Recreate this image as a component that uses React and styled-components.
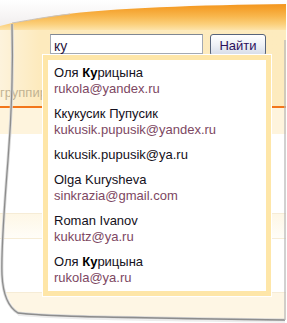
import React from "react";
import styled, { createGlobalStyle } from "styled-components";

const Global = createGlobalStyle`
  html, body { margin: 0; padding: 0; background: #fff; }
  body { font-family: "Liberation Sans", Arial, sans-serif; font-size: 13px; }
`;

const contacts = [
  { name: ["Оля ", "Ку", "рицына"], email: "rukola@yandex.ru" },
  { name: ["Ккукусик Пупусик"], email: "kukusik.pupusik@yandex.ru" },
  { name: ["kukusik.pupusik@ya.ru"] },
  { name: ["Olga Kurysheva"], email: "sinkrazia@gmail.com" },
  { name: ["Roman Ivanov"], email: "kukutz@ya.ru" },
  { name: ["Оля ", "Ку", "рицына"], email: "rukola@ya.ru" },
];

function App() {
  return (
    <>
      <Global />
      <Frame>
        <Page>
          <Header />
          <Panel>
            <SearchRow>
              <Input>ку</Input>
              <Button>Найти</Button>
            </SearchRow>
            <GroupLabel>группир</GroupLabel>
          </Panel>
          <Row tone="cream" h={26} />
          <Row h={79} />
          <Row tone="fade" h={25} line />
          <Row h={27} line />
          <Row h={27} />
          <Footer />

          <Dropdown>
            {contacts.map((c, i) => (
              <Item key={i}>
                <Name>
                  {c.name.map((part, j) =>
                    j === 1 ? <b key={j}>{part}</b> : <span key={j}>{part}</span>
                  )}
                </Name>
                {c.email && <Email>{c.email}</Email>}
              </Item>
            ))}
          </Dropdown>
        </Page>

        <Curl viewBox="0 0 287 323" width="287" height="323">
          <defs>
            <linearGradient id="topShade" x1="0" y1="0" x2="0" y2="1">
              <stop offset="0" stopColor="#ffffff" />
              <stop offset="1" stopColor="#f1eeee" />
            </linearGradient>
          </defs>
          <path d="M0,0 L287,0 L287,4 C200,5 110,8 60,15 C40,18 24,21 12,23 L0,26 Z" fill="url(#topShade)" />
          <path d="M12,23 C30,20 45,17 70,14" fill="none" stroke="#c9c2bc" strokeWidth="1" />
          <path d="M0,250 C1,275 4,298 18,313 L80,317 L285,320 L287,320 L287,323 L0,323 Z" fill="#fff" />
          <rect x="286" y="0" width="1" height="323" fill="#fff" />
          <path d="M12,24 C13,60 12,110 8,160 C4,210 1,250 2,275 C3,295 8,307 18,313 C40,316 80,317 285,320"
            fill="none" stroke="#d8d8d8" strokeWidth="3" />
          <path d="M12,24 C13,60 12,110 8,160 C4,210 1,250 2,275 C3,295 8,307 18,313 C40,316 80,317 285,320"
            fill="none" stroke="#8d8d8d" strokeWidth="1.3" />
          <path d="M285,40 L285,320" fill="none" stroke="#b9b9b9" strokeWidth="1.3" />
          <path d="M18,315 C60,319 120,320 285,322" fill="none" stroke="#ececec" strokeWidth="1.5" />
        </Curl>
      </Frame>
    </>
  );
}

export default App;

const Frame = styled.div`
  position: relative;
  width: 287px;
  height: 323px;
  overflow: hidden;
  background: #fff;
`;

const Page = styled.div`
  position: relative;
  width: 287px;
  display: flex;
  flex-direction: column;
`;

const Header = styled.div`
  height: 30px;
  background: linear-gradient(
    to bottom,
    #f28d12 0px,
    #f59f2a 8px,
    #f8b64c 16px,
    #fbcf7a 24px,
    #fde3a9 30px
  );
`;

const Panel = styled.div`
  height: 78px;
  box-sizing: border-box;
  display: flex;
  flex-direction: column;
  justify-content: space-between;
  padding: 4px 0 6px 0;
  background: linear-gradient(to right, #fdf3dc 0px, #fdeabd 40px, #fdebbe 100%);
  border-bottom: 2px solid #f2761a;
`;

const SearchRow = styled.div`
  display: flex;
  align-items: flex-start;
  gap: 7px;
  padding-left: 50px;
`;

const Input = styled.div`
  width: 153px;
  height: 20px;
  box-sizing: border-box;
  padding: 3px 0 0 3px;
  background: #fff;
  border: 1px solid #a3a9b3;
  border-top-color: #7f8793;
  color: #2a1540;
  font-size: 14px;
  line-height: 16px;
`;

const Button = styled.div`
  width: 56px;
  height: 22px;
  box-sizing: border-box;
  display: flex;
  align-items: center;
  justify-content: center;
  border: 1px solid #56637a;
  border-radius: 3px;
  background: linear-gradient(to bottom, #ffffff 0%, #eef1f6 50%, #d6dce8 100%);
  color: #2c0f5c;
  font-size: 13px;
`;

const GroupLabel = styled.div`
  white-space: nowrap;
  padding-left: 0;
  color: #c2b393;
  font-size: 13px;
  line-height: 14px;
`;

const Row = styled.div`
  height: ${(p) => p.h}px;
  box-sizing: border-box;
  border-top: ${(p) => (p.line ? "1px solid #f6ecd6" : "none")};
  background: ${(p) =>
    p.tone === "cream"
      ? "#fef4dd"
      : p.tone === "fade"
      ? "linear-gradient(to bottom, #fef7e6, #fffdf8)"
      : "#fff"};
`;

const Footer = styled.div`
  height: 30px;
  border-top: 1px solid #f6ecd6;
  background: #fef6e4;
`;

const Dropdown = styled.div`
  position: absolute;
  left: 43px;
  top: 55px;
  width: 228px;
  box-sizing: border-box;
  border: 5px solid #fee6a8;
  box-shadow: 0 0 0 1px #ffffff;
  background: #fff;
  padding: 1px 0 0 0;
`;

const Item = styled.div`
  padding: 4px 6px 5px 6px;
  line-height: 16px;
  font-size: 13px;
`;

const Name = styled.div`
  color: #141020;
  b { font-weight: bold; color: #000; }
`;

const Email = styled.div`
  color: #7d4762;
`;

const Curl = styled.svg`
  position: absolute;
  left: 0;
  top: 0;
  pointer-events: none;
`;
